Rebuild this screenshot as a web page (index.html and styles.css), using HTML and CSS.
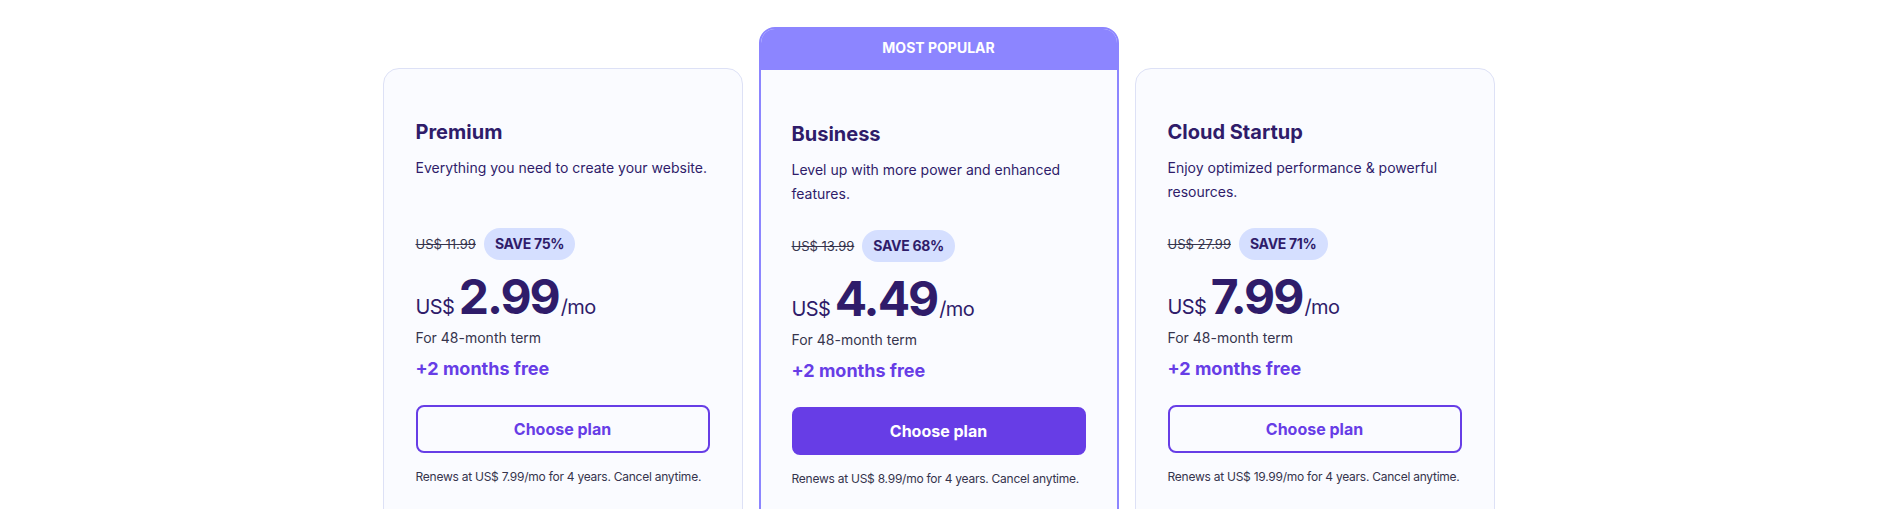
FILE: index.html
```html
<!DOCTYPE html>
<html lang="en">
<head>
<meta charset="utf-8">
<title>Plans</title>
<link rel="stylesheet" href="styles.css">
</head>
<body>
<section class="plans">
  <article class="card card--plain">
    <div class="card__body">
      <h2 class="card__title">Premium</h2>
      <p class="card__desc">Everything you need to create your website.</p>
      <div class="card__discount">
        <span class="card__old">US$ 11.99</span>
        <span class="card__save">SAVE 75%</span>
      </div>
      <div class="card__price"><span class="card__cur">US$</span> <span class="card__amount">2.99</span><span class="card__per">/mo</span></div>
      <p class="card__term">For 48-month term</p>
      <p class="card__free">+2 months free</p>
      <button class="card__btn">Choose plan</button>
      <p class="card__renew">Renews at US$ 7.99/mo for 4 years. Cancel anytime.</p>
    </div>
  </article>
  <article class="card card--popular">
    <div class="card__header">MOST POPULAR</div>
    <div class="card__body">
      <h2 class="card__title">Business</h2>
      <p class="card__desc">Level up with more power and enhanced features.</p>
      <div class="card__discount">
        <span class="card__old">US$ 13.99</span>
        <span class="card__save">SAVE 68%</span>
      </div>
      <div class="card__price"><span class="card__cur">US$</span> <span class="card__amount">4.49</span><span class="card__per">/mo</span></div>
      <p class="card__term">For 48-month term</p>
      <p class="card__free">+2 months free</p>
      <button class="card__btn card__btn--filled">Choose plan</button>
      <p class="card__renew">Renews at US$ 8.99/mo for 4 years. Cancel anytime.</p>
    </div>
  </article>
  <article class="card card--plain">
    <div class="card__body">
      <h2 class="card__title">Cloud Startup</h2>
      <p class="card__desc">Enjoy optimized performance &amp; powerful resources.</p>
      <div class="card__discount">
        <span class="card__old">US$ 27.99</span>
        <span class="card__save">SAVE 71%</span>
      </div>
      <div class="card__price"><span class="card__cur">US$</span> <span class="card__amount">7.99</span><span class="card__per">/mo</span></div>
      <p class="card__term">For 48-month term</p>
      <p class="card__free">+2 months free</p>
      <button class="card__btn">Choose plan</button>
      <p class="card__renew">Renews at US$ 19.99/mo for 4 years. Cancel anytime.</p>
    </div>
  </article>
</section>
</body>
</html>
```

FILE: styles.css
```css
* { box-sizing: border-box; }

html, body {
  margin: 0;
  padding: 0;
  background: #ffffff;
  overflow: hidden;
}

body {
  font-family: Inter, "Noto Sans", "Liberation Sans", sans-serif;
  color: #2f1c6a;
}

.plans {
  display: flex;
  justify-content: center;
  align-items: flex-start;
  gap: 16px;
  padding: 27px 15px 0 0;
}

.card {
  width: 360px;
  flex: none;
  background: #fafbff;
  border: 1px solid #dde1f6;
  border-radius: 16px;
}

.card--plain {
  margin-top: 41px;
}

.card--popular {
  border: 2px solid #8c85ff;
}

.card__header {
  height: 41px;
  background: #8c85ff;
  color: #ffffff;
  font-size: 14px;
  font-weight: 700;
  line-height: 38px;
  text-align: center;
  border-radius: 14px 14px 0 0;
}

.card__body {
  padding: 49px 32px 60px;
}

.card--popular .card__body {
  padding: 50px 31px 60px;
}

.card__title {
  margin: 0;
  font-size: 20px;
  line-height: 28px;
  font-weight: 700;
  color: #2f1c6a;
}

.card__desc {
  margin: 10px 0 0;
  min-height: 48px;
  font-size: 14px;
  line-height: 24px;
  color: #2f1c6a;
}

.card__discount {
  margin-top: 24px;
  display: flex;
  align-items: center;
  gap: 8px;
  height: 32px;
}

.card__old {
  font-size: 13px;
  line-height: 20px;
  color: #36344d;
  text-decoration: line-through;
}

.card__save {
  background: #d5dfff;
  color: #2f1c6a;
  font-size: 14px;
  font-weight: 700;
  line-height: 16px;
  letter-spacing: -0.3px;
  padding: 8px 11px;
  border-radius: 20px;
}

.card__price {
  margin-top: 9px;
  line-height: 56px;
  height: 56px;
  white-space: nowrap;
  color: #2f1c6a;
}

.card__cur,
.card__per {
  font-size: 20px;
  letter-spacing: -0.6px;
}

.card__amount {
  font-size: 48px;
  font-weight: 700;
  letter-spacing: -2px;
}

.card__per {
  margin-left: 2px;
}

.card__term {
  margin: 3px 0 0;
  font-size: 14px;
  line-height: 20px;
  color: #36344d;
}

.card__free {
  margin: 9px 0 0;
  font-size: 18px;
  line-height: 24px;
  font-weight: 700;
  color: #673de6;
}

.card__btn {
  display: block;
  width: 100%;
  height: 48px;
  margin-top: 24px;
  border: 2px solid #673de6;
  border-radius: 8px;
  background: transparent;
  color: #673de6;
  font-family: inherit;
  font-size: 16px;
  font-weight: 700;
  cursor: pointer;
}

.card__btn--filled {
  background: #673de6;
  color: #ffffff;
}

.card__renew {
  margin: 16px 0 0;
  font-size: 12px;
  line-height: 16px;
  letter-spacing: -0.25px;
  white-space: nowrap;
  color: #36344d;
}
```
